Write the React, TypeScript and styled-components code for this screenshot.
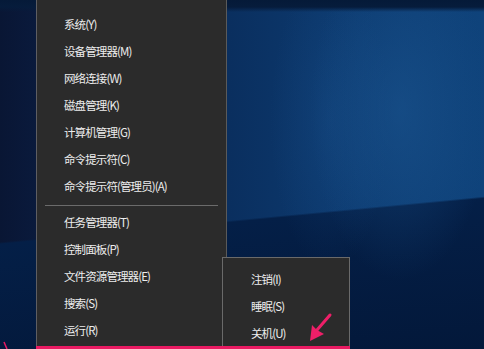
import React from 'react';
import styled, { createGlobalStyle } from 'styled-components';

const GlobalStyle = createGlobalStyle`
  html, body {
    margin: 0;
    padding: 0;
    width: 484px;
    height: 349px;
    overflow: hidden;
    background: #0b2a55;
  }
  * {
    box-sizing: border-box;
  }
`;

const Desktop = styled.div`
  position: relative;
  width: 484px;
  height: 349px;
  overflow: hidden;
  display: flex;
  align-items: flex-start;
  padding-left: 36px;
  font-family: 'Noto Sans CJK SC', 'Noto Sans', sans-serif;
  background:
    linear-gradient(to bottom, #051a38 0, #061c3c 7px, rgba(6, 28, 60, 0) 12px),
    radial-gradient(ellipse 90px 170px at 400px 110px, rgba(30, 90, 150, 0.45), rgba(30, 90, 150, 0) 100%),
    radial-gradient(ellipse 60px 150px at 330px 120px, rgba(25, 80, 140, 0.3), rgba(25, 80, 140, 0) 100%),
    linear-gradient(174.6deg, rgba(0, 0, 0, 0) 0, rgba(0, 0, 0, 0) 241px, #041f47 243px, #03183a 100%),
    linear-gradient(to right, #091634 0, #0a1a3c 36px, #0a2f5f 230px, #0d3c72 360px, #0f437b 484px);
`;

const Menu = styled.div`
  width: 191px;
  height: 360px;
  padding-top: 11px;
  background: #2b2b2b;
  border-left: 1px solid #5e5e62;
  border-right: 1px solid #5a5a5a;
`;

const Item = styled.div<{ $indent: number }>`
  height: 27px;
  line-height: 27px;
  padding-left: ${({ $indent }) => $indent}px;
  font-size: 11.5px;
  letter-spacing: -0.9px;
  color: #ededed;
  white-space: nowrap;
`;

const Separator = styled.div`
  height: 9px;
  padding: 5px 8px 0 8px;

  &::before {
    content: '';
    display: block;
    height: 1px;
    background: #6b6b6b;
  }
`;

const SubMenu = styled.div`
  position: absolute;
  left: 222px;
  top: 257px;
  width: 128px;
  height: 110px;
  padding-top: 8px;
  background: #2b2b2b;
  border: 1px solid #6a6a6a;
`;

const Annotation = styled.svg`
  position: absolute;
  left: 0;
  top: 0;
  pointer-events: none;
`;

const mainItems = [
  ['系统(Y)', '设备管理器(M)', '网络连接(W)', '磁盘管理(K)', '计算机管理(G)', '命令提示符(C)', '命令提示符(管理员)(A)'],
  ['任务管理器(T)', '控制面板(P)', '文件资源管理器(E)', '搜索(S)', '运行(R)'],
];

const powerItems = ['注销(I)', '睡眠(S)', '关机(U)'];

export default function App() {
  return (
    <>
      <GlobalStyle />
      <Desktop>
        <Menu>
          {mainItems[0].map((label) => (
            <Item key={label} $indent={27}>{label}</Item>
          ))}
          <Separator />
          {mainItems[1].map((label) => (
            <Item key={label} $indent={27}>{label}</Item>
          ))}
        </Menu>

        <SubMenu>
          {powerItems.map((label) => (
            <Item key={label} $indent={28}>{label}</Item>
          ))}
        </SubMenu>

        <Annotation width="484" height="349" viewBox="0 0 484 349">
          <rect x="36" y="346" width="314" height="3" fill="#ea1a62" />
          <path d="M4 342 L7 349" stroke="#ea1a62" strokeWidth="1.5" fill="none" />
          <path d="M330 315 L317 330" stroke="#ee1f68" strokeWidth="3" strokeLinecap="round" fill="none" />
          <path d="M310 341 L312 325 L317 330 L324 334 Z" fill="#ee1f68" />
        </Annotation>
      </Desktop>
    </>
  );
}
